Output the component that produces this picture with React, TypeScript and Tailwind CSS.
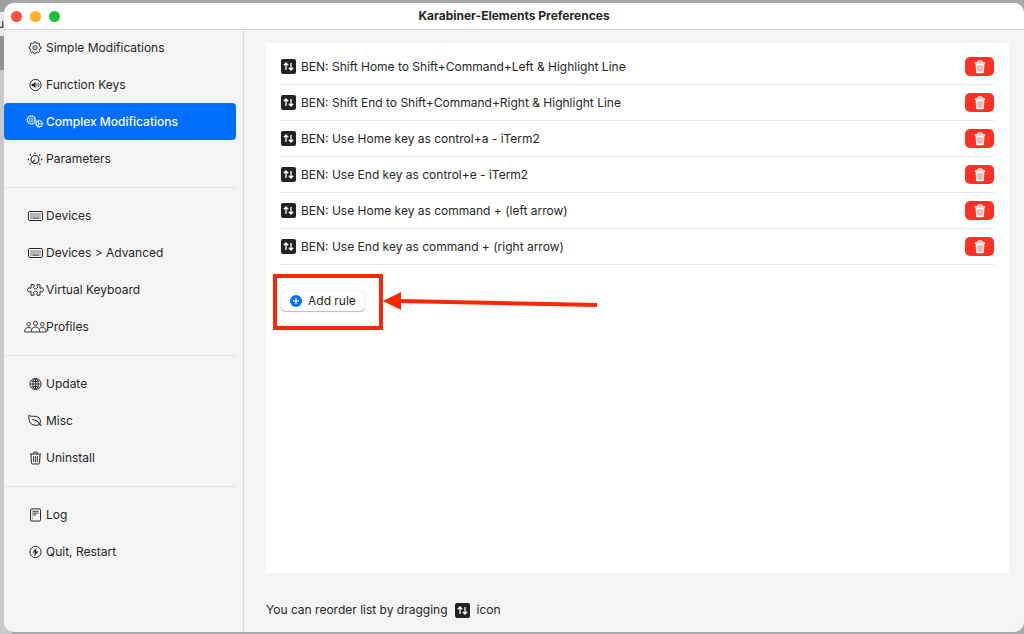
import type { ReactNode } from 'react';

type IconName =
  | 'gear'
  | 'speaker'
  | 'gears'
  | 'dial'
  | 'keyboard'
  | 'puzzle'
  | 'people'
  | 'globe'
  | 'leaf'
  | 'trash'
  | 'log'
  | 'bolt';

const navGroups: { label: string; icon: IconName }[][] = [
  [
    { label: 'Simple Modifications', icon: 'gear' },
    { label: 'Function Keys', icon: 'speaker' },
    { label: 'Complex Modifications', icon: 'gears' },
    { label: 'Parameters', icon: 'dial' },
  ],
  [
    { label: 'Devices', icon: 'keyboard' },
    { label: 'Devices > Advanced', icon: 'keyboard' },
    { label: 'Virtual Keyboard', icon: 'puzzle' },
    { label: 'Profiles', icon: 'people' },
  ],
  [
    { label: 'Update', icon: 'globe' },
    { label: 'Misc', icon: 'leaf' },
    { label: 'Uninstall', icon: 'trash' },
  ],
  [
    { label: 'Log', icon: 'log' },
    { label: 'Quit, Restart', icon: 'bolt' },
  ],
];

const rules = [
  'BEN: Shift Home to Shift+Command+Left & Highlight Line',
  'BEN: Shift End to Shift+Command+Right & Highlight Line',
  'BEN: Use Home key as control+a - iTerm2',
  'BEN: Use End key as control+e - iTerm2',
  'BEN: Use Home key as command + (left arrow)',
  'BEN: Use End key as command + (right arrow)',
];

const iconShapes: Record<IconName, ReactNode> = {
  gear: (
    <>
      <path d="M9.900 1.900L10.400.8h1.200l.5 1.100 1.500.6 1.200-.5.9.9-.5 1.200.6 1.500 1.200.5v1.300l-1.200.5-.6 1.500.5 1.200-.9.9-1.200-.5-1.500.6-.5 1.200h-1.200l-.5-1.200-1.500-.6-1.200.5-.9-.9.5-1.200-.6-1.500L5 7.400V6.100l1.200-.5.6-1.500-.5-1.200.9-.9 1.200.5z" />
      <circle cx="11" cy="6.800" r="2.100" strokeWidth="0.9" />
      <circle cx="11" cy="6.800" r="0.6" fill="currentColor" stroke="none" />
    </>
  ),
  speaker: (
    <>
      <circle cx="11.500" cy="7" r="5.600" />
      <path d="M8 6h1.300l2-1.700v5.400L9.300 8H8z" fill="currentColor" strokeWidth="0.5" />
      <path d="M12.700 5.700a2 2 0 0 1 0 2.600M14 4.600a3.600 3.600 0 0 1 0 4.800" strokeWidth="0.8" />
    </>
  ),
  gears: (
    <>
      <circle cx="7.300" cy="5" r="3.900" strokeWidth="0.9" />
      <circle cx="7.300" cy="5" r="4.600" strokeWidth="0.8" strokeDasharray="1.200 1.210" />
      <circle cx="7.300" cy="5" r="1.900" strokeWidth="0.8" />
      <circle cx="7.300" cy="5" r="0.5" fill="currentColor" stroke="none" />
      <circle cx="15.200" cy="8.800" r="3" strokeWidth="0.9" />
      <circle cx="15.200" cy="8.800" r="3.700" strokeWidth="0.8" strokeDasharray="1.160 1.160" />
      <path d="M14.300 6v5.600M14.300 8.800h3.700" strokeWidth="0.8" />
    </>
  ),
  dial: (
    <>
      <circle cx="11" cy="7.500" r="4" strokeWidth="1.100" />
      <path d="M11 7.700L8.200 10.300" strokeWidth="1.100" />
      <path
        d="M11 .8v1.300M3.700 7.500h1.300M17 7.500h1.300M5.700 2.600l.9.900M15.400 3.500l.9-.9M5.700 12.400l.9-.9M15.400 11.500l.9.900"
        strokeWidth="1.400"
      />
    </>
  ),
  keyboard: (
    <>
      <rect x="4.500" y="2.500" width="14" height="9" rx="1.300" />
      <rect x="6" y="4" width="11" height="6" fill="currentColor" stroke="none" opacity="0.3" />
      <path d="M9 9.300h5.500" strokeWidth="0.9" opacity="0.7" />
    </>
  ),
  puzzle: (
    <path d="M7 1.700h3v1.600c-1.100.9-.6 2.500 1.500 2.500s2.600-1.600 1.500-2.500V1.700h3v3.600h1c.6-.9 2.500-.6 2.500 1.500s-1.900 2.600-2.500 1.500h-1v3.900h-3v-1.500c1.100-.9.600-2.400-1.500-2.400s-2.600 1.500-1.500 2.400v1.500H7V8.300H6c-.6 1.100-2.500.6-2.500-1.500S5.400 4.400 6 5.300h1z" />
  ),
  people: (
    <g strokeWidth="0.9">
      <circle cx="11.500" cy="3.300" r="2.100" />
      <path d="M7.300 12c0-3.600 1.600-5 4.200-5s4.200 1.400 4.200 5z" />
      <circle cx="4.700" cy="4.300" r="1.800" />
      <path d="M7 12H.7c0-3 1.300-4.500 4-4.500 1.200 0 2 .3 2.700 1" />
      <circle cx="18.300" cy="4.300" r="1.800" />
      <path d="M16 12h6.300c0-3-1.300-4.500-4-4.500-1.200 0-2 .3-2.700 1" />
    </g>
  ),
  globe: (
    <g strokeWidth="0.9">
      <circle cx="11.500" cy="7" r="5.600" />
      <ellipse cx="11.500" cy="7" rx="2.700" ry="5.600" />
      <path d="M6 7h11M11.500 1.400v11.200M7.200 3.800c2.500 1.200 6 1.200 8.600 0M7.200 10.200c2.500-1.200 6-1.200 8.600 0" />
    </g>
  ),
  leaf: (
    <>
      <path d="M4.900 1.300c1.500 1.300 4 .9 6.600 1.100 3.400.4 5 2.600 5 5.100 0 1.300-.5 2.300-1.200 3.200-2.800.9-6 .9-8-.8C5 8 4.400 4.600 4.900 1.300z" />
      <path d="M8.300 5.500c3 .3 5.700 1.400 7 4.200.7 1.200 1.300 1 1.700 2.200" strokeWidth="1.200" />
    </>
  ),
  trash: (
    <>
      <path d="M6 3h11M9.500 2.800V2c0-.6.300-.9.900-.9h2.200c.6 0 .9.300.9.900v.8M7 3.200l.4 8.700c0 .7.500 1.100 1.200 1.100h5.800c.7 0 1.200-.4 1.200-1.100l.4-8.700" />
      <path d="M9.500 5l.2 6M11.500 5v6M13.500 5l-.2 6" strokeWidth="0.9" />
    </>
  ),
  log: (
    <>
      <rect x="6.500" y="0.900" width="10" height="12.200" rx="1.300" />
      <path d="M9 3.300h5.500M9 5.100h5.500M9 6.900h3" strokeWidth="0.9" />
      <path d="M8.300 1.200v11.600" strokeWidth="0.6" opacity="0.5" />
    </>
  ),
  bolt: (
    <>
      <circle cx="11.500" cy="7" r="5.600" />
      <path d="M12.500 3L8.800 7.600h2.300L10.500 11l3.700-4.600h-2.300z" fill="currentColor" strokeWidth="0.2" />
    </>
  ),
};

function NavIcon({ name }: { name: IconName }) {
  return (
    <svg
      viewBox="0 0 23 14"
      className="-mr-px h-3.5 w-[23px] shrink-0"
      fill="none"
      stroke="currentColor"
      strokeWidth="1"
      strokeLinejoin="round"
      aria-hidden="true"
    >
      {iconShapes[name]}
    </svg>
  );
}

function DragIcon() {
  return (
    <svg viewBox="0 0 15 15" className="size-[15px] shrink-0" fill="none" aria-hidden="true">
      <rect width="15" height="15" rx="2" fill="#222222" />
      <path
        d="M5 11V4.200M2.800 6.200L5 4l2.200 2.200M10 4v6.800M7.800 8.800L10 11l2.200-2.200"
        stroke="#ffffff"
        strokeWidth="1.300"
      />
    </svg>
  );
}

function TrashIcon() {
  return (
    <svg viewBox="0 0 12 14" className="h-3.5 w-3" fill="none" stroke="#ffffff" aria-hidden="true">
      <path d="M4 2.500V1.700c0-.5.300-.8.800-.8h2.400c.5 0 .8.300.8.800v.8" strokeWidth="1.200" />
      <path d="M.8 3h10.400" strokeWidth="1.400" />
      <path d="M1.600 4h8.800l-.5 8.200c0 .7-.5 1.100-1.200 1.100H3.300c-.7 0-1.200-.4-1.200-1.100z" fill="#ffffff" stroke="none" />
      <path d="M4 5.200l.2 6.500M6 5.200v6.500M8 5.200l-.2 6.500" stroke="#ff3126" strokeWidth="0.7" />
    </svg>
  );
}

// Arrow that points at the "Add rule" button
function Callout() {
  return (
    <>
      <div className="pointer-events-none absolute -top-[17px] -left-2 h-14 w-[110px] border-4 border-[#ff2600]" />
      <svg
        viewBox="0 0 214 20"
        className="pointer-events-none absolute top-0 left-[102px] h-5 w-[214px] max-w-none"
        aria-hidden="true"
      >
        <path d="M0 10L18 1v18z" fill="#ff2600" />
        <path d="M16 10L214 14" stroke="#ff2600" strokeWidth="4" />
      </svg>
    </>
  );
}

function Sidebar() {
  return (
    <nav className="-mt-px w-60 shrink-0 border-r border-[#dcdcdc] pr-[7px]">
      {navGroups.map((group, index) => (
        <div key={index}>
          {index > 0 && <hr className="mt-2.5 mb-[9px] border-[#e3e3e3]" />}
          <ul>
            {group.map(({ label, icon }) => {
              const selected = icon === 'gears';
              return (
                <li key={label}>
                  <button
                    type="button"
                    aria-current={selected ? 'page' : undefined}
                    className={
                      selected
                        ? 'flex h-[37px] w-full items-center rounded-[4px] bg-[#006fff] pl-5 font-medium text-white'
                        : 'flex h-[37px] w-full items-center rounded-[4px] pl-5'
                    }
                  >
                    <NavIcon name={icon} />
                    {label}
                  </button>
                </li>
              );
            })}
          </ul>
        </div>
      ))}
    </nav>
  );
}

export default function App() {
  return (
    <div className="relative flex min-h-screen flex-col overflow-hidden bg-[#a8a8a8] pt-[3px] pb-0.5 pl-1 font-['Inter','Liberation_Sans',sans-serif] text-[12px] text-[#262626]">
      {/* windows behind the preferences window */}
      <div className="absolute inset-y-0 left-0 flex w-3 flex-col overflow-hidden bg-[#c9c9c9]">
        <div className="h-3 bg-[#a0a0a0]" />
        <div className="flex h-6 items-center justify-end bg-[#e9e9e9] pr-2">u</div>
        <div className="h-[34px] bg-[#929292]" />
      </div>

      <div className="relative flex flex-1 flex-col overflow-hidden rounded-[10px] bg-[#f4f4f4]">
        <header className="relative flex h-[27px] items-center justify-center border-b border-[#d2d2d2] bg-white">
          <div className="absolute left-[7px] flex gap-2">
            <button type="button" aria-label="Close" className="size-[11px] rounded-full bg-[#ff4f49]" />
            <button type="button" aria-label="Minimize" className="size-[11px] rounded-full bg-[#fdb125]" />
            <button type="button" aria-label="Zoom" className="size-[11px] rounded-full bg-[#1fbf38]" />
          </div>
          <h1 className="font-bold">Karabiner-Elements Preferences</h1>
        </header>

        <div className="flex flex-1">
          <Sidebar />

          <main className="flex min-w-0 flex-1 flex-col pt-[13px] pr-[15px] pl-[22px]">
            <section className="flex-1 bg-white px-[15px] pt-1.5">
              <ul>
                {rules.map((rule) => (
                  <li key={rule} className="flex h-9 items-center border-b border-[#e6e6e6]">
                    <DragIcon />
                    <span className="ml-[5px] flex-1">{rule}</span>
                    <button
                      type="button"
                      aria-label={`Delete ${rule}`}
                      className="flex h-[19px] w-[29px] items-center justify-center rounded-[5px] bg-[#ff3126]"
                    >
                      <TrashIcon />
                    </button>
                  </li>
                ))}
              </ul>

              <div className="relative mt-[26px] w-fit">
                <button
                  type="button"
                  className="flex h-5 items-center gap-1.5 rounded-[5px] bg-white px-[9px] shadow-[0_0_1px_rgba(0,0,0,0.3),0_1px_1px_rgba(0,0,0,0.25)]"
                >
                  <svg viewBox="0 0 12 12" className="size-3" aria-hidden="true">
                    <circle cx="6" cy="6" r="6" fill="#0a72f7" />
                    <path d="M6 3v6M3 6h6" stroke="#ffffff" strokeWidth="1.200" />
                  </svg>
                  Add rule
                </button>
                <Callout />
              </div>
            </section>

            <p className="flex items-center gap-[7px] pt-7 pb-[13px] leading-[18px]">
              You can reorder list by dragging
              <DragIcon />
              icon
            </p>
          </main>
        </div>
      </div>
    </div>
  );
}
